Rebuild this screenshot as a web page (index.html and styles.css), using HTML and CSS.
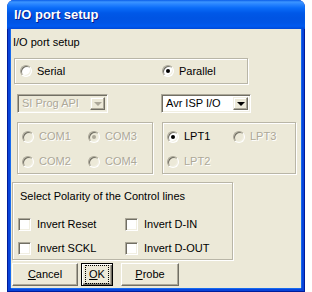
FILE: index.html
```html
<!DOCTYPE html>
<html>
<head>
<meta charset="utf-8">
<link rel="stylesheet" href="styles.css">
</head>
<body>
<div class="win">
  <div class="title">I/O port setup</div>
  <div class="body">
    <div class="lbl">I/O port setup</div>
    <div class="etch box1">
      <div class="opt w142"><span class="radio"></span><span>Serial</span></div>
      <div class="opt"><span class="radio on"></span><span>Parallel</span></div>
    </div>
    <div class="combos">
      <div class="combo dis c1"><span class="val">SI Prog API</span><span class="drop"><i></i></span></div>
      <div class="combo c2"><span class="val">Avr ISP I/O</span><span class="drop"><i></i></span></div>
    </div>
    <div class="groups">
      <div class="etch grp com">
        <div class="opt dis"><span class="radio"></span><span>COM1</span></div>
        <div class="opt dis"><span class="radio on"></span><span>COM3</span></div>
        <div class="opt dis"><span class="radio"></span><span>COM2</span></div>
        <div class="opt dis"><span class="radio"></span><span>COM4</span></div>
      </div>
      <div class="etch grp lpt">
        <div class="opt"><span class="radio on"></span><span>LPT1</span></div>
        <div class="opt dis"><span class="radio"></span><span>LPT3</span></div>
        <div class="opt dis"><span class="radio"></span><span>LPT2</span></div>
      </div>
    </div>
    <div class="etch pol">
      <div class="pol-title">Select Polarity of the Control lines</div>
      <div class="checks">
        <div class="opt"><span class="check"></span><span>Invert Reset</span></div>
        <div class="opt"><span class="check"></span><span>Invert D-IN</span></div>
        <div class="opt"><span class="check"></span><span>Invert SCKL</span></div>
        <div class="opt"><span class="check"></span><span>Invert D-OUT</span></div>
      </div>
    </div>
    <div class="buttons">
      <div class="btn cancel"><span><u>C</u>ancel</span></div>
      <div class="btn ok def"><span class="focus"><u>O</u>K</span></div>
      <div class="btn probe"><span><u>P</u>robe</span></div>
    </div>
  </div>
</div>
</body>
</html>
```
FILE: styles.css
```css
html, body { margin: 0; padding: 0; background: #fff; }
body {
  font-family: "Liberation Sans", Arial, sans-serif;
  font-size: 11px;
  color: #000;
  width: 312px;
  height: 292px;
  overflow: hidden;
}
.win {
  margin-left: 7px;
  width: 298px;
  height: 292px;
  background: #0843d9;
  border-radius: 7px 7px 0 0;
  box-sizing: border-box;
  border: 1px solid #001c9a;
  border-top: none;
  display: flex;
  flex-direction: column;
}
.title {
  height: 29px;
  box-sizing: border-box;
  border-radius: 7px 7px 0 0;
  background: linear-gradient(to bottom, #0a5de8 0, #3c95ff 2px, #2a86ff 4px, #0a6cf8 8px, #0058e8 13px, #0054e3 18px, #0055e6 23px, #005af0 26px, #0049d8 29px);
  color: #fff;
  font-weight: bold;
  font-size: 13px;
  line-height: 29px;
  padding-left: 7px;
  text-shadow: 1px 1px 0 #0a1a8a;
  margin: 0 -1px;
}
.body {
  flex: 1;
  margin: 0 3px 3px;
  background: #ece9d8;
  box-shadow: -1px 0 0 #166aee, 1px 0 0 #166aee, 0 1px 0 #166aee;
  display: flex;
  flex-direction: column;
  align-items: flex-start;
}
.lbl {
  margin-top: 7px;
  line-height: 13px;
  height: 13px;
  padding-left: 2px;
}
.etch {
  box-sizing: border-box;
  border: 1px solid #b9b6a7;
  box-shadow: inset 1px 1px 0 #fff, 1px 1px 0 #fff;
}
.box1 {
  margin: 9px 0 0 3px;
  width: 234px;
  height: 26px;
  display: flex;
  align-items: center;
  padding-left: 5px;
}
.opt {
  display: flex;
  align-items: center;
  gap: 5px;
  line-height: 13px;
  white-space: nowrap;
}
.w142 { width: 142px; }
.radio {
  box-sizing: border-box;
  width: 12px;
  height: 12px;
  border-radius: 50%;
  border: 1px solid;
  border-color: #aca899 #fff #fff #aca899;
  box-shadow: inset 1px 1px 0 #716f64, inset -1px -1px 0 #f1efe2;
  background: #fff;
  flex: none;
  position: relative;
}
.radio.on::after {
  content: "";
  position: absolute;
  left: 3px;
  top: 3px;
  width: 4px;
  height: 4px;
  border-radius: 50%;
  background: #000;
}
.dis { color: #aca899; text-shadow: 1px 1px 0 #fff; }
.dis .radio { background: #ece9d8; }
.dis .radio.on::after { background: #aca899; }
.combos {
  margin: 10px 0 0 6px;
  display: flex;
}
.combo {
  box-sizing: border-box;
  height: 19px;
  border: 1px solid;
  border-color: #aca899 #fff #fff #aca899;
  box-shadow: inset 1px 1px 0 #716f64, inset -1px -1px 0 #f1efe2;
  background: #fff;
  display: flex;
  align-items: stretch;
  padding: 2px;
}
.c1 { width: 91px; }
.c2 { width: 90px; margin-left: 53px; }
.combo.dis { background: #ece9d8; }
.val {
  flex: 1;
  line-height: 13px;
  padding-left: 2px;
}
.drop {
  box-sizing: border-box;
  width: 15px;
  background: #ece9d8;
  border: 1px solid;
  border-color: #f1efe2 #716f64 #716f64 #f1efe2;
  box-shadow: inset -1px -1px 0 #aca899, inset 1px 1px 0 #fff;
  display: flex;
  align-items: center;
  justify-content: center;
}
.drop i {
  width: 0;
  height: 0;
  border-left: 4px solid transparent;
  border-right: 4px solid transparent;
  border-top: 4px solid #000;
  margin-top: 1px;
}
.dis .drop i { border-top-color: #aca899; }
.groups {
  margin: 9px 0 0 6px;
  display: flex;
}
.grp {
  height: 52px;
  display: grid;
  grid-template-columns: 66px 66px;
  grid-auto-rows: 25px;
  align-items: center;
  padding: 1px 0 0 4px;
}
.com { width: 136px; }
.lpt { width: 134px; margin-left: 9px; }
.pol {
  margin: 8px 0 0 1px;
  width: 221px;
  height: 78px;
  padding: 7px 0 0 5px;
}
.pol-title { line-height: 13px; padding-left: 2px; }
.checks {
  margin-top: 9px;
  display: grid;
  grid-template-columns: 107px 100px;
  grid-auto-rows: 24px;
  align-items: center;
}
.check {
  box-sizing: border-box;
  width: 13px;
  height: 13px;
  border: 1px solid;
  border-color: #aca899 #fff #fff #aca899;
  box-shadow: inset 1px 1px 0 #716f64, inset -1px -1px 0 #f1efe2;
  background: #fff;
  flex: none;
}
.checks .opt { gap: 6px; }
.buttons {
  margin: 3px 0 0 1px;
  display: flex;
}
.btn {
  box-sizing: border-box;
  height: 23px;
  background: #ece9d8;
  border: 1px solid;
  border-color: #fff #716f64 #716f64 #fff;
  box-shadow: inset -1px -1px 0 #aca899;
  display: flex;
  align-items: center;
  justify-content: center;
  line-height: 13px;
}
.btn.def {
  border: 1px solid #000;
  box-shadow: inset 1px 1px 0 #fff, inset -1px -1px 0 #716f64, inset -2px -2px 0 #aca899;
}
.cancel { width: 66px; }
.ok { width: 32px; margin-left: 3px; }
.probe { width: 58px; margin-left: 8px; }
.focus {
  outline: 1px dotted #000;
  outline-offset: 1px;
  padding: 1px 2px;
}
```
